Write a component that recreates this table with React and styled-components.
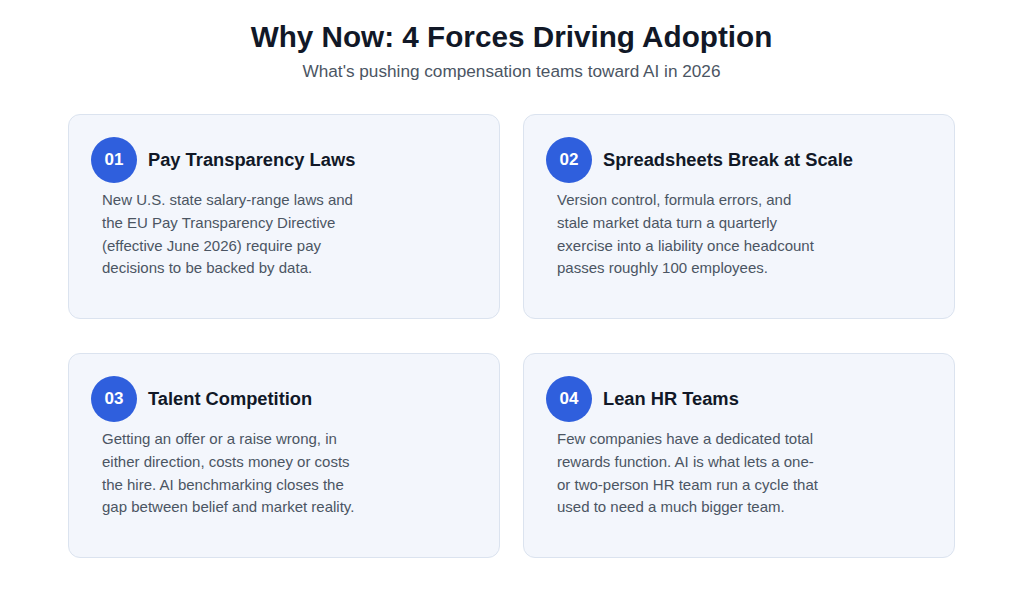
import React from 'react'
import styled, { createGlobalStyle } from 'styled-components'

const GlobalStyle = createGlobalStyle`
  html, body {
    margin: 0;
    padding: 0;
    background: #ffffff;
    font-family: "Liberation Sans", Arial, sans-serif;
  }
`

const Page = styled.div`
  width: 1024px;
  height: 592px;
  box-sizing: border-box;
  padding: 18px 69px 0 68px;
`

const Header = styled.header`
  text-align: center;
`

const Title = styled.h1`
  margin: 0;
  font-size: 29.7px;
  line-height: 38px;
  font-weight: 700;
  color: #111827;
`

const Subtitle = styled.p`
  margin: 0;
  font-size: 17.2px;
  line-height: 30px;
  color: #4b5563;
`

const Grid = styled.div`
  display: grid;
  grid-template-columns: 1fr 1fr;
  grid-auto-rows: 205px;
  column-gap: 23px;
  row-gap: 34px;
  margin-top: 28px;
`

const Card = styled.article`
  box-sizing: border-box;
  background: #f3f6fc;
  border: 1px solid #dbe3ef;
  border-radius: 12px;
  padding: 22px 22px;
`

const CardHead = styled.div`
  display: flex;
  align-items: center;
  gap: 11px;
`

const Badge = styled.span`
  width: 46px;
  height: 46px;
  border-radius: 50%;
  background: #2f5fdd;
  color: #ffffff;
  display: flex;
  align-items: center;
  justify-content: center;
  font-size: 17px;
  font-weight: 700;
`

const CardTitle = styled.h3`
  margin: 0;
  font-size: 18.3px;
  font-weight: 700;
  color: #111827;
`

const CardText = styled.p`
  margin: 6px 0 0 11px;
  width: 262px;
  font-size: 15px;
  line-height: 22.8px;
  color: #4b5563;
`

const forces = [
  {
    num: '01',
    title: 'Pay Transparency Laws',
    text: 'New U.S. state salary-range laws and the EU Pay Transparency Directive (effective June 2026) require pay decisions to be backed by data.',
  },
  {
    num: '02',
    title: 'Spreadsheets Break at Scale',
    text: 'Version control, formula errors, and stale market data turn a quarterly exercise into a liability once headcount passes roughly 100 employees.',
  },
  {
    num: '03',
    title: 'Talent Competition',
    text: 'Getting an offer or a raise wrong, in either direction, costs money or costs the hire. AI benchmarking closes the gap between belief and market reality.',
  },
  {
    num: '04',
    title: 'Lean HR Teams',
    text: 'Few companies have a dedicated total rewards function. AI is what lets a one- or two-person HR team run a cycle that used to need a much bigger team.',
  },
]

const App = () => {
  return (
    <>
      <GlobalStyle />
      <Page>
        <Header>
          <Title>Why Now: 4 Forces Driving Adoption</Title>
          <Subtitle>What's pushing compensation teams toward AI in 2026</Subtitle>
        </Header>
        <Grid>
          {forces.map(f => (
            <Card key={f.num}>
              <CardHead>
                <Badge>{f.num}</Badge>
                <CardTitle>{f.title}</CardTitle>
              </CardHead>
              <CardText>{f.text}</CardText>
            </Card>
          ))}
        </Grid>
      </Page>
    </>
  )
}

export default App
